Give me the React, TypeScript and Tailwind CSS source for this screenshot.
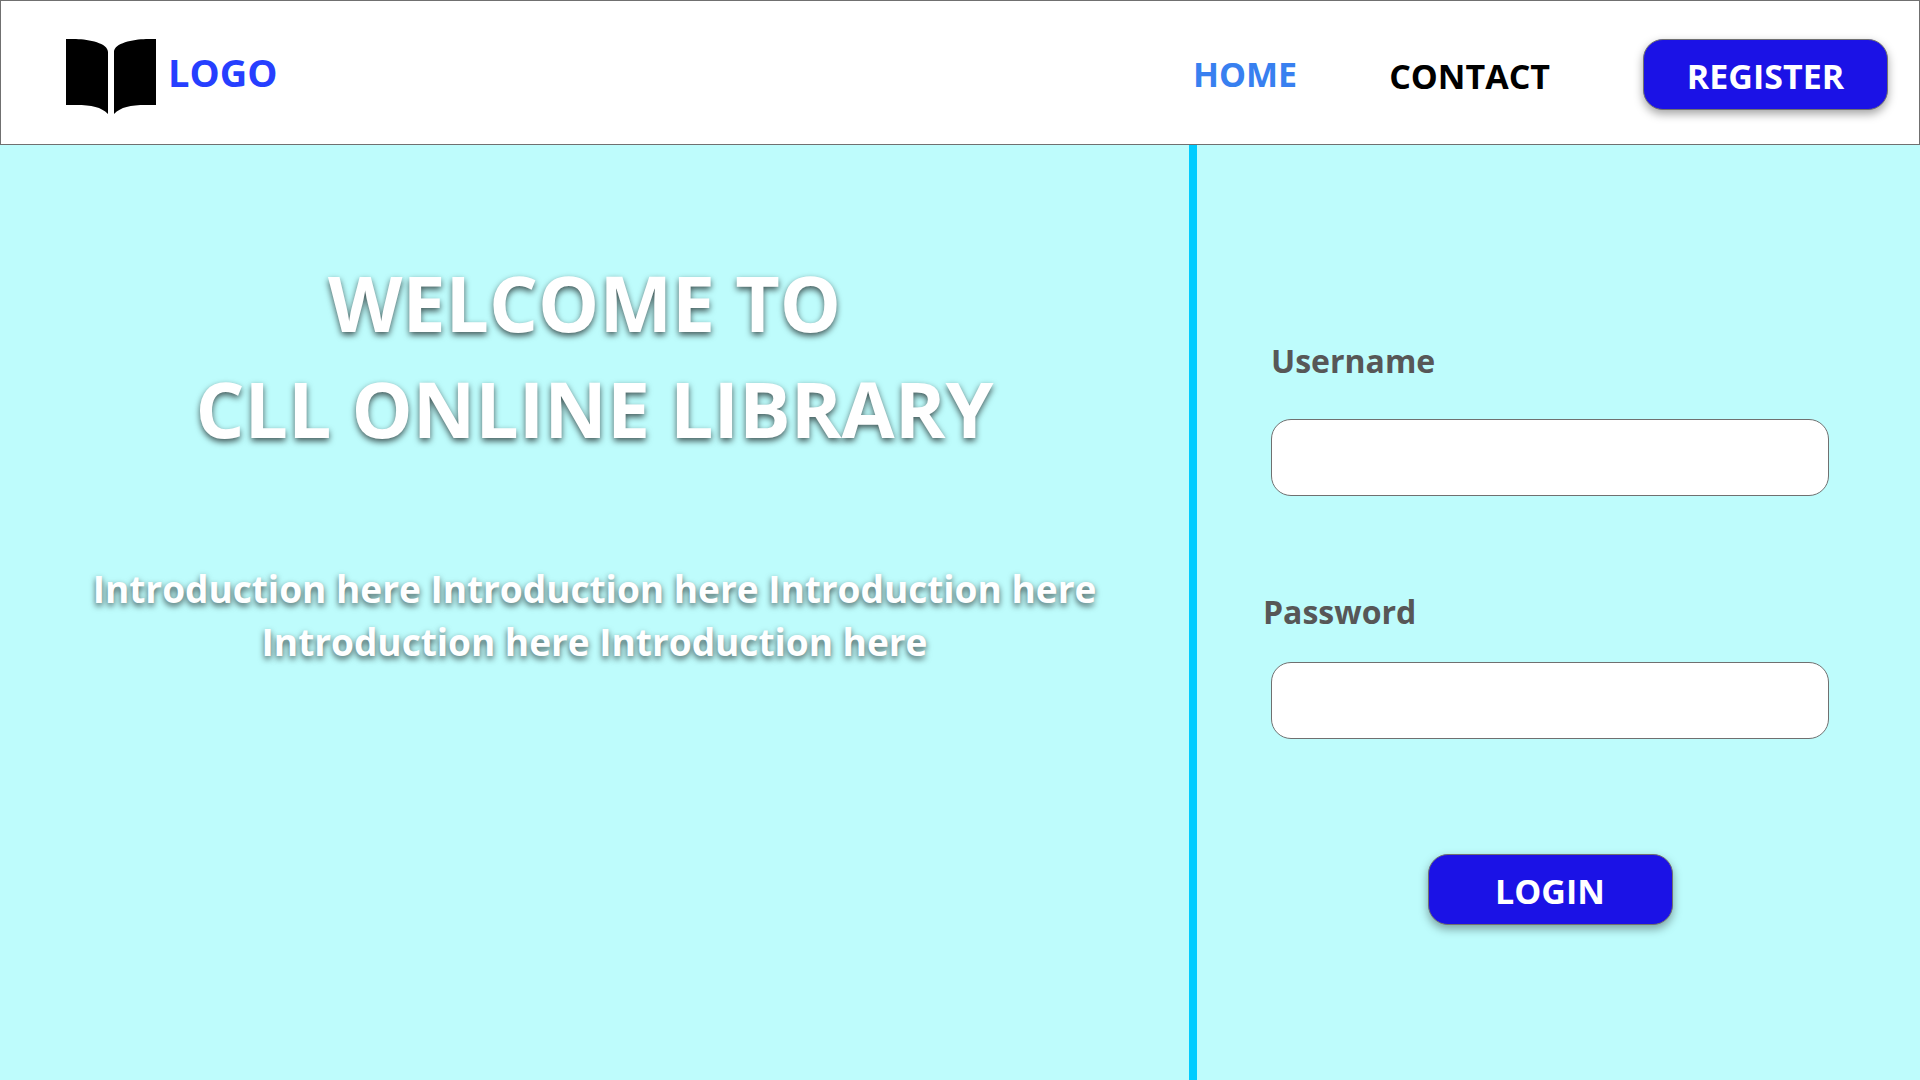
import React from "react";

const actionButton =
  "h-[71px] w-[245px] rounded-[20px] border border-[#707070] bg-[#1b12e6] pt-1 text-[34px] font-bold text-white shadow-[0_4px_10px_rgba(0,0,0,0.36)]";
const textField =
  "block h-[77px] w-full rounded-[20px] border border-[#707070] bg-white px-6 text-3xl text-[#575757] outline-none";
const fieldLabel = "block w-fit text-[32px] leading-12 font-bold text-[#575757]";

function BookIcon() {
  return (
    <svg width="90" height="75" viewBox="0 0 90 75" aria-hidden="true">
      <path d="M0 0H10C23 0.5 42 4 42 13V75C35 68 26 66 10 66H0Z" />
      <path d="M90 0H80C67 0.5 48 4 48 13V75C55 68 64 66 80 66H90Z" />
    </svg>
  );
}

function Header() {
  return (
    <header className="flex h-[145px] shrink-0 items-start justify-between border border-[#707070] bg-white pt-[38px] pr-[31px] pl-[65px]">
      <a href="#" className="flex items-start gap-3 text-[38px] leading-[66px] font-bold text-[#263fff]">
        <BookIcon />
        LOGO
      </a>
      <nav className="flex items-start text-[34px] font-bold">
        <a href="#home" className="mr-[92px] leading-[71px] text-[#3880f0]">HOME</a>
        <a href="#contact" className="mr-[93px] leading-[75px] text-black">CONTACT</a>
        <button type="button" className={actionButton}>REGISTER</button>
      </nav>
    </header>
  );
}

function Welcome() {
  return (
    <section className="pt-[105px] text-center font-bold text-white">
      <h1 className="text-[77px] leading-[106px] whitespace-pre [text-shadow:0_3px_6px_rgba(0,0,0,0.65)]">
        {"WELCOME TO \nCLL ONLINE LIBRARY"}
      </h1>
      <p className="mt-[100px] text-[37px] leading-[53px] [text-shadow:0_3px_6px_rgba(0,0,0,0.65)]">
        Introduction here Introduction here Introduction here
        <br />
        Introduction here Introduction here
      </p>
    </section>
  );
}

function LoginForm() {
  return (
    <form className="pt-[192px] pr-[91px] pl-[74px]" onSubmit={(e) => e.preventDefault()}>
      <label htmlFor="username" className={fieldLabel}>Username</label>
      <input id="username" type="text" className={`mt-[34px] ${textField}`} />
      <label htmlFor="password" className={`mt-[92px] -ml-2 ${fieldLabel}`}>Password</label>
      <input id="password" type="password" className={`mt-[26px] ${textField}`} />
      <button type="submit" className={`mx-auto mt-[115px] block ${actionButton}`}>LOGIN</button>
    </form>
  );
}

export default function App() {
  return (
    <div className="flex min-h-screen flex-col bg-[#befcfc] font-['Open_Sans',sans-serif]">
      <Header />
      <main className="grid flex-1 grid-cols-[1189fr_8px_723fr]">
        <Welcome />
        <div className="bg-[#00ccff]" />
        <LoginForm />
      </main>
    </div>
  );
}
